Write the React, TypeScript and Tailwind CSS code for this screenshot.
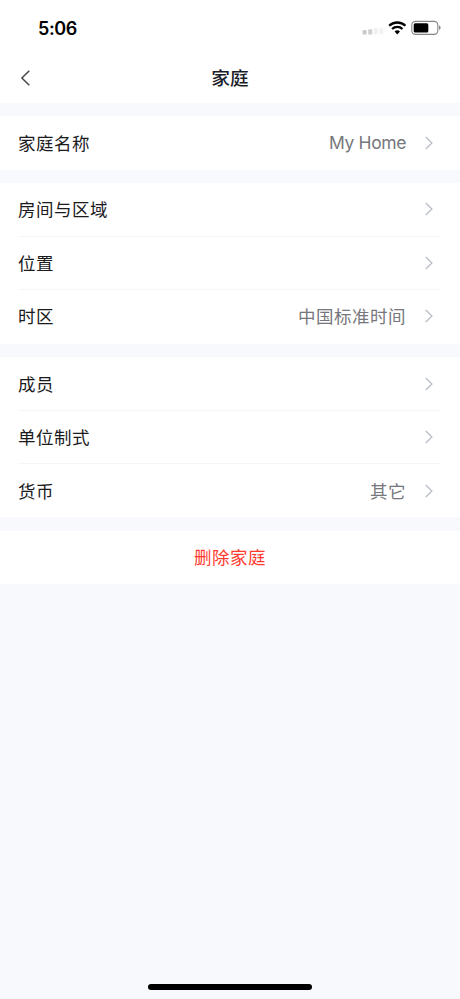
import React from "react";

const FONT = "font-[Inter,'Noto_Sans_CJK_SC',sans-serif]";

function Chevron() {
  return (
    <svg className="ml-[19px] block h-[14px] w-[8px] shrink-0" viewBox="0 0 8 14" fill="none" stroke="#b9bdc8" strokeWidth="1.3">
      <path d="M0.8 1 6.9 7 0.8 13" />
    </svg>
  );
}

function Row({ label, value, latin = false }: { label: string; value?: string; latin?: boolean }) {
  return (
    <div className="flex h-[52.5px] shrink-0 items-center pr-[27px] pl-[18px]">
      <span className="flex-1 pt-[2px] text-[17.5px] leading-6 tracking-[0.5px] text-[#1b1b1d]">{label}</span>
      {value && (
        <span className={latin ? "text-[17.5px] leading-6 tracking-[-0.4px] text-[#76777c]" : "pt-[2px] text-[17.5px] leading-6 tracking-[0.5px] text-[#76777c]"}>
          {value}
        </span>
      )}
      <Chevron />
    </div>
  );
}

function Divider() {
  return <div className="mr-5 ml-[18px] h-px shrink-0 bg-[#f6f6f7]" />;
}

function StatusBar() {
  return (
    <div className="flex h-[54px] items-start justify-between pr-[19px] pl-[38px]">
      <span className="mt-[17px] text-[18px] leading-6 font-semibold tracking-[-0.4px] text-black">5:06</span>
      <svg className="mt-[18px] h-[20px] w-[80px]" viewBox="361 18 80 20">
        <rect x="362.6" y="30" width="4" height="4.6" rx="1.2" fill="#c9c9ca" />
        <rect x="368.2" y="29.3" width="4" height="5.3" rx="1.2" fill="#cfcfd0" />
        <rect x="373.8" y="28" width="4" height="6.4" rx="1.2" fill="#f0f0f0" />
        <rect x="379.2" y="27.5" width="4" height="7" rx="1.2" fill="#f3f3f3" />
        <g fill="none" stroke="#000" strokeWidth="2.3">
          <path d="M389.2 25.8a11.6 11.6 0 0 1 16.2 0" />
          <path d="M392.1 29a7.4 7.4 0 0 1 10.4 0" />
        </g>
        <path d="M394.6 31.6a3.9 3.9 0 0 1 5.4 0L397.3 34.4Z" fill="#000" />
        <rect x="411.8" y="21.4" width="26" height="13" rx="3.6" fill="none" stroke="#858585" strokeWidth="1.1" />
        <rect x="413.7" y="23.2" width="14.6" height="9.4" rx="1.5" fill="#000" />
        <path d="M439 25.6v4.4c.9-.3 1.6-1.2 1.6-2.2s-.7-1.9-1.6-2.2Z" fill="#858585" />
      </svg>
    </div>
  );
}

export default function App() {
  return (
    <main className={`flex h-[999px] w-[460px] flex-col overflow-hidden bg-[#f8f9fd] ${FONT}`} lang="zh-CN">
      <header className="h-[103px] shrink-0 bg-white">
        <StatusBar />
        <div className="grid h-[48px] grid-cols-[1fr_auto_1fr] items-center">
          <svg className="ml-[20px] h-[16px] w-[10px]" viewBox="0 0 10 16" fill="none" stroke="#47484c" strokeWidth="1.5">
            <path d="M9.3 .8 1.9 8l7.4 7.2" />
          </svg>
          <h1 className="pt-[2px] text-[18.7px] leading-6 font-medium text-[#1b1d29]">家庭</h1>
          <span />
        </div>
      </header>
      <section className="mt-[13px] flex h-[54px] shrink-0 flex-col justify-center bg-white">
        <Row label="家庭名称" value="My Home" latin />
      </section>
      <section className="mt-[13px] flex h-[160.5px] shrink-0 flex-col bg-white">
        <Row label="房间与区域" />
        <Divider />
        <Row label="位置" />
        <Divider />
        <Row label="时区" value="中国标准时间" />
      </section>
      <section className="mt-[13.5px] flex h-[160px] shrink-0 flex-col justify-center bg-white">
        <Row label="成员" />
        <Divider />
        <Row label="单位制式" />
        <Divider />
        <Row label="货币" value="其它" />
      </section>
      <button className="mt-[14px] h-[53px] shrink-0 bg-white pt-[2px] text-[17.5px] tracking-[0.5px] text-[#ff3b30]">
        删除家庭
      </button>
      <footer className="mt-auto flex shrink-0 justify-center pb-[9px]">
        <div className="h-[6px] w-[164px] rounded-full bg-black" />
      </footer>
    </main>
  );
}
